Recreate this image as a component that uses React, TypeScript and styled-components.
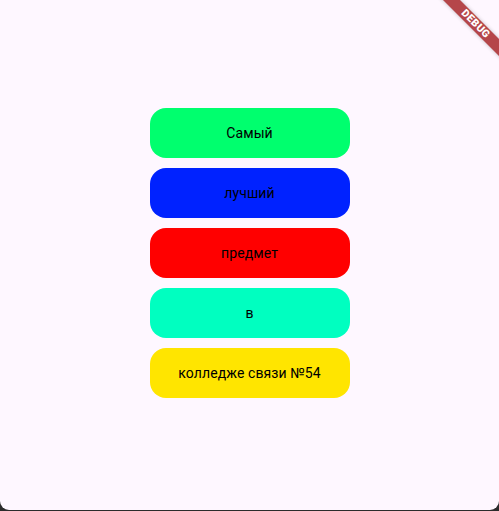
import React from 'react';
import styled, { createGlobalStyle } from 'styled-components';

const GlobalStyle = createGlobalStyle`
  html, body {
    margin: 0;
    padding: 0;
    background: #2b2b2b;
    overflow: hidden;
  }
  * {
    box-sizing: border-box;
  }
`;

const Screen = styled.div`
  position: relative;
  width: 499px;
  height: 510px;
  background: #fef7ff;
  border-bottom-left-radius: 9px;
  border-bottom-right-radius: 9px;
  overflow: hidden;
  display: flex;
  justify-content: center;
  padding-top: 108px;
  font-family: Roboto, 'Noto Sans', sans-serif;
`;

const Column = styled.div`
  display: flex;
  flex-direction: column;
  gap: 10px;
`;

const WordButton = styled.button<{ $bg: string }>`
  width: 200px;
  height: 50px;
  border: none;
  border-radius: 16px;
  background: ${({ $bg }) => $bg};
  color: #000;
  font-family: Roboto, 'Noto Sans', sans-serif;
  font-size: 14px;
  font-weight: 400;
  letter-spacing: 0.1px;
  display: flex;
  align-items: center;
  justify-content: center;
  padding: 0;
  cursor: pointer;
`;

const DebugBanner = styled.div`
  position: absolute;
  left: 425px;
  top: 18px;
  width: 101px;
  height: 12px;
  background: #b5464a;
  box-shadow: 0 0 4px rgba(0, 0, 0, 0.25);
  transform: rotate(45deg);
  color: #fff;
  font-family: Roboto, 'Noto Sans', sans-serif;
  font-size: 10.5px;
  font-weight: 900;
  line-height: 12px;
  text-align: center;
  letter-spacing: 0.4px;
`;

const words = [
  { label: 'Самый', bg: '#00ff6e' },
  { label: 'лучший', bg: '#0022ff' },
  { label: 'предмет', bg: '#ff0000' },
  { label: 'в', bg: '#00ffc0' },
  { label: 'колледже связи №54', bg: '#ffe500' },
];

const App: React.FC = () => {
  return (
    <>
      <GlobalStyle />
      <Screen>
        <Column>
          {words.map((w) => (
            <WordButton key={w.label} $bg={w.bg}>
              {w.label}
            </WordButton>
          ))}
        </Column>
        <DebugBanner>DEBUG</DebugBanner>
      </Screen>
    </>
  );
};

export default App;
